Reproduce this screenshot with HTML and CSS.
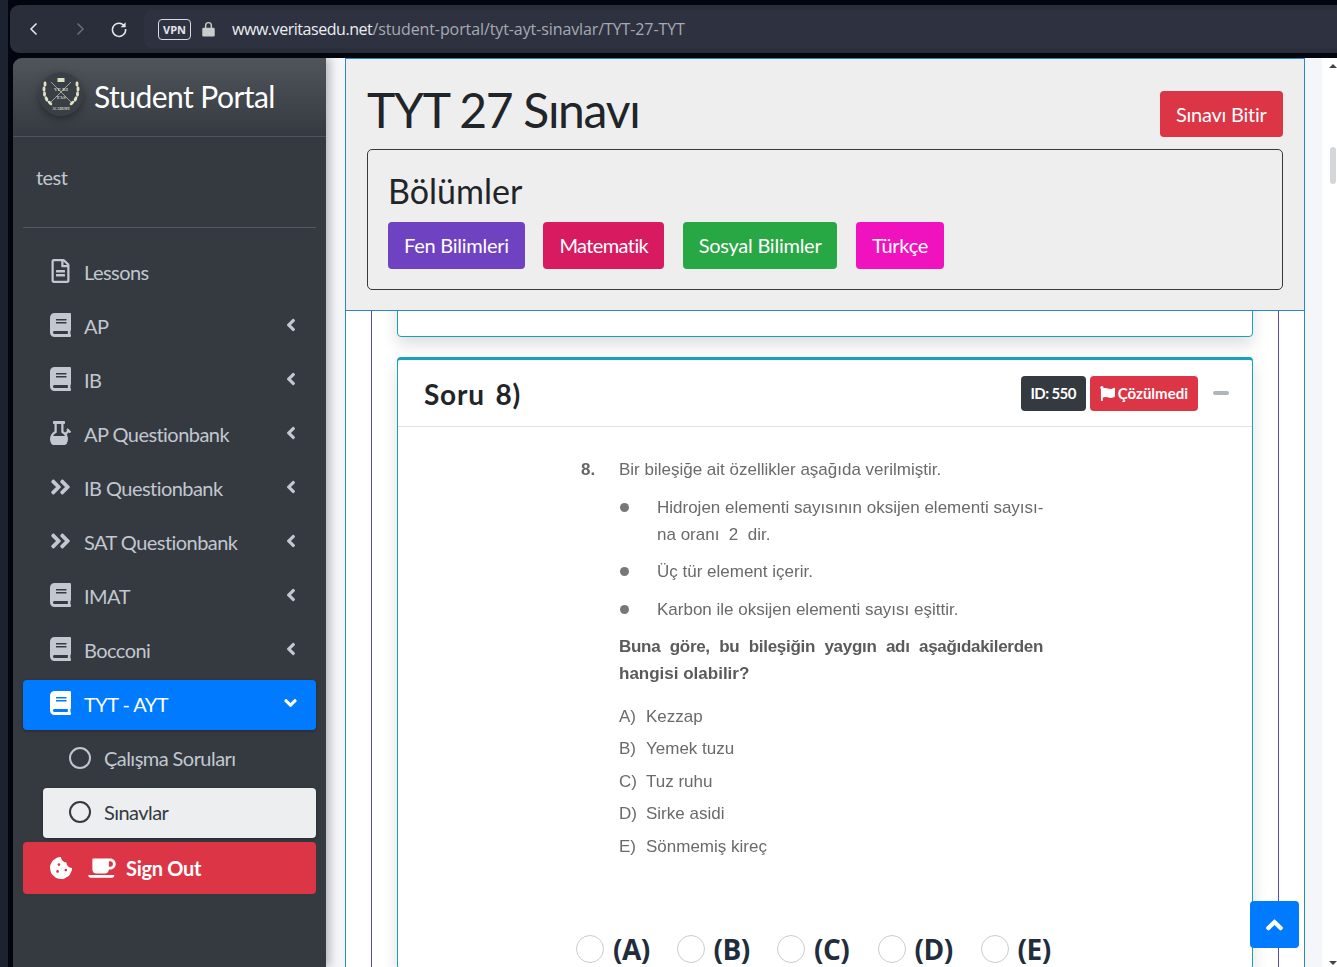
FILE: index.html
```html
<!DOCTYPE html>
<html lang="tr">
<head>
  <meta charset="UTF-8">
  <meta name="viewport" content="width=device-width, initial-scale=1">
  <title>TYT 27 Sınavı</title>
  <link rel="stylesheet" href="styles.css">
</head>
<body>
<svg class="sprite" width="0" height="0">
  <symbol id="i-book" viewBox="0 0 448 512"><path d="M448 360V24c0-13.3-10.7-24-24-24H96C43 0 0 43 0 96v320c0 53 43 96 96 96h328c13.3 0 24-10.7 24-24v-16c0-7.5-3.5-14.3-8.9-18.7-4.2-15.4-4.2-59.3 0-74.7 5.4-4.3 8.9-11.1 8.9-18.6zM128 134c0-3.3 2.7-6 6-6h212c3.3 0 6 2.7 6 6v20c0 3.3-2.7 6-6 6H134c-3.3 0-6-2.7-6-6v-20zm0 64c0-3.3 2.7-6 6-6h212c3.3 0 6 2.7 6 6v20c0 3.3-2.7 6-6 6H134c-3.3 0-6-2.7-6-6v-20zm253.4 250H96c-17.7 0-32-14.3-32-32 0-17.6 14.4-32 32-32h285.4c-1.9 17.1-1.9 46.9 0 64z"/></symbol>
  <symbol id="i-file" viewBox="0 0 384 512"><path d="M288 248v28c0 6.6-5.4 12-12 12H108c-6.6 0-12-5.4-12-12v-28c0-6.6 5.4-12 12-12h168c6.6 0 12 5.4 12 12zm-12 72H108c-6.6 0-12 5.4-12 12v28c0 6.6 5.4 12 12 12h168c6.6 0 12-5.4 12-12v-28c0-6.6-5.4-12-12-12zm108-188.1V464c0 26.5-21.5 48-48 48H48c-26.5 0-48-21.5-48-48V48C0 21.5 21.5 0 48 0h204.1C264.8 0 277 5.1 286 14.1L369.9 98c9 8.9 14.1 21.2 14.1 33.9zm-128-80V128h76.1L256 51.9zM336 464V176H232c-13.3 0-24-10.7-24-24V48H48v416h288z"/></symbol>
  <symbol id="i-bong" viewBox="0 0 448 512"><path d="M302.5 512c23.18 0 44.43-12.58 56-32.66C374.69 451.26 384 418.75 384 384c0-36.12-10.08-69.81-27.44-98.62L400 241.94l9.38 9.38c6.25 6.25 16.38 6.25 22.63 0l11.3-11.32c6.25-6.25 6.25-16.38 0-22.63l-52.69-52.69c-6.25-6.25-16.38-6.25-22.63 0l-11.31 11.31c-6.25 6.25-6.25 16.38 0 22.63l9.38 9.38-39.41 39.41c-11.56-11.37-24.53-21.33-38.65-29.51V63.74l15.97-.02c8.82-.01 15.97-7.16 15.98-15.98l.04-31.72C320 7.17 312.82-.01 303.97 0L80.03.26c-8.82.01-15.97 7.16-15.98 15.98l-.04 31.73c-.01 8.85 7.17 16.02 16.02 16.01L96 63.96v153.93C38.67 251.1 0 312.97 0 384c0 34.75 9.31 67.27 25.5 95.34C37.08 499.42 58.33 512 81.5 512h221zM120.06 259.43L144 245.56V63.91l96-.11v181.76l23.94 13.87c24.81 14.37 44.12 35.73 56.56 60.57h-257c12.45-24.84 31.75-46.2 56.56-60.57z"/></symbol>
  <symbol id="i-double" viewBox="0 0 448 512"><path d="M224.3 273l-136 136c-9.4 9.4-24.6 9.4-33.9 0l-22.6-22.6c-9.4-9.4-9.4-24.6 0-33.9l96.4-96.4-96.4-96.4c-9.4-9.4-9.4-24.6 0-33.9L54.3 103c9.4-9.4 24.6-9.4 33.9 0l136 136c9.5 9.4 9.5 24.6.1 34zm192-34l-136-136c-9.4-9.4-24.6-9.4-33.9 0l-22.6 22.6c-9.4 9.4-9.4 24.6 0 33.9l96.4 96.4-96.4 96.4c-9.4 9.4-9.4 24.6 0 33.9l22.6 22.6c9.4 9.4 24.6 9.4 33.9 0l136-136c9.4-9.2 9.4-24.4 0-33.8z"/></symbol>
  <symbol id="i-left" viewBox="0 0 256 512"><path d="M31.7 239l136-136c9.4-9.4 24.6-9.4 33.9 0l22.6 22.6c9.4 9.4 9.4 24.6 0 33.9L127.9 256l96.4 96.4c9.4 9.4 9.4 24.6 0 33.9L201.7 409c-9.4 9.4-24.6 9.4-33.9 0l-136-136c-9.5-9.4-9.5-24.6-.1-34z"/></symbol>
  <symbol id="i-down" viewBox="0 0 320 512"><path d="M143 352.3L7 216.3c-9.4-9.4-9.4-24.6 0-33.9l22.6-22.6c9.4-9.4 24.6-9.4 33.9 0l96.4 96.4 96.4-96.4c9.4-9.4 24.6-9.4 33.9 0l22.6 22.6c9.4 9.4 9.4 24.6 0 33.9l-136 136c-9.2 9.4-24.4 9.4-33.8 0z"/></symbol>
  <symbol id="i-up" viewBox="0 0 320 512"><path d="M177 159.7l136 136c9.4 9.4 9.4 24.6 0 33.9l-22.6 22.6c-9.4 9.4-24.6 9.4-33.9 0L160 255.9l-96.4 96.4c-9.4 9.4-24.6 9.4-33.9 0L7 329.7c-9.4-9.4-9.4-24.6 0-33.9l136-136c9.4-9.5 24.6-9.5 34-.1z"/></symbol>
</svg>

<div class="browser-bar">
  <svg class="nav-arrow" viewBox="0 0 12 16"><path d="M8.5 2.5 3 8l5.5 5.5"/></svg>
  <svg class="nav-arrow nav-arrow-off" viewBox="0 0 12 16"><path d="M3.5 2.5 9 8l-5.5 5.5"/></svg>
  <svg class="nav-reload" viewBox="0 0 18 18"><path d="M14.6 6.2A6.6 6.6 0 1 0 15.6 9"/><path class="fill" d="M15.6 2.2v5h-5z"/></svg>
  <div class="address">
    <span class="vpn">VPN</span>
    <svg class="lock" viewBox="0 0 14 18"><path class="shackle" d="M3.8 8V5a3.2 3.2 0 0 1 6.4 0v3"/><rect y="7.5" width="14" height="10" rx="1.5"/></svg>
    <span class="url"><b>www.veritasedu.net</b>/student-portal/tyt-ayt-sinavlar/TYT-27-TYT</span>
  </div>
</div>

<div class="app">
  <aside class="sidebar">
    <div class="brand">
      <svg class="logo" viewBox="0 0 44 44">
        <circle cx="22" cy="22" r="22" fill="#3a3f45"/>
        <g fill="#dfe2c4">
          <ellipse cx="6" cy="12" rx="1.5" ry="2.8"/><ellipse cx="5" cy="17" rx="1.5" ry="2.8"/><ellipse cx="5.5" cy="22" rx="1.5" ry="2.8"/><ellipse cx="7.5" cy="27" rx="1.5" ry="2.8" transform="rotate(-25 7.5 27)"/><ellipse cx="11" cy="31" rx="1.5" ry="2.8" transform="rotate(-45 11 31)"/>
          <ellipse cx="38" cy="12" rx="1.5" ry="2.8"/><ellipse cx="39" cy="17" rx="1.5" ry="2.8"/><ellipse cx="38.5" cy="22" rx="1.5" ry="2.8"/><ellipse cx="36.5" cy="27" rx="1.5" ry="2.8" transform="rotate(25 36.5 27)"/><ellipse cx="33" cy="31" rx="1.5" ry="2.8" transform="rotate(45 33 31)"/>
          <rect x="18.5" y="6" width="7" height="4"/>
        </g>
        <path d="M12 10 32 30M32 10 12 30" stroke="#b9bcb5" stroke-width=".8"/>
        <text class="logo-text" x="22" y="19" text-anchor="middle">VE  RI</text>
        <text class="logo-text" x="22" y="27" text-anchor="middle">TAS</text>
        <text class="logo-text logo-small" x="22" y="38" text-anchor="middle">ACADEMY</text>
      </svg>
      <span class="brand-name">Student Portal</span>
    </div>
    <div class="user-panel">test</div>
    <nav class="menu">
      <a class="menu-item"><svg class="ico"><use href="#i-file"/></svg><span>Lessons</span></a>
      <a class="menu-item"><svg class="ico"><use href="#i-book"/></svg><span>AP</span><svg class="caret"><use href="#i-left"/></svg></a>
      <a class="menu-item"><svg class="ico"><use href="#i-book"/></svg><span>IB</span><svg class="caret"><use href="#i-left"/></svg></a>
      <a class="menu-item"><svg class="ico"><use href="#i-bong"/></svg><span>AP Questionbank</span><svg class="caret"><use href="#i-left"/></svg></a>
      <a class="menu-item"><svg class="ico"><use href="#i-double"/></svg><span>IB Questionbank</span><svg class="caret"><use href="#i-left"/></svg></a>
      <a class="menu-item"><svg class="ico"><use href="#i-double"/></svg><span>SAT Questionbank</span><svg class="caret"><use href="#i-left"/></svg></a>
      <a class="menu-item"><svg class="ico"><use href="#i-book"/></svg><span>IMAT</span><svg class="caret"><use href="#i-left"/></svg></a>
      <a class="menu-item"><svg class="ico"><use href="#i-book"/></svg><span>Bocconi</span><svg class="caret"><use href="#i-left"/></svg></a>
      <a class="menu-item active"><svg class="ico"><use href="#i-book"/></svg><span>TYT - AYT</span><svg class="caret caret-down"><use href="#i-down"/></svg></a>
      <a class="menu-item sub"><i class="ring"></i><span>Çalışma Soruları</span></a>
      <a class="menu-item sub current"><i class="ring"></i><span>Sınavlar</span></a>
      <a class="sign-out">
        <svg class="ico-cookie" viewBox="0 0 512 512"><path d="M510.52 255.82c-69.97-.85-126.47-57.69-126.47-127.86-70.17 0-127-56.49-127.86-126.45-27.26-4.14-55.13.3-79.72 12.82l-69.13 35.22a132.221 132.221 0 0 0-57.79 57.81l-35.1 68.88a132.645 132.645 0 0 0-12.82 80.95l12.08 76.27a132.521 132.521 0 0 0 37.16 72.96l54.77 54.76a132.036 132.036 0 0 0 72.71 37.06l76.71 12.15c27.51 4.36 55.7-.11 80.53-12.76l69.13-35.21a132.273 132.273 0 0 0 57.79-57.81l35.1-68.88c12.56-24.64 17.01-52.58 12.91-79.91zM176 368c-17.67 0-32-14.33-32-32s14.33-32 32-32 32 14.33 32 32-14.33 32-32 32zm32-160c-17.67 0-32-14.33-32-32s14.33-32 32-32 32 14.33 32 32-14.33 32-32 32zm160 128c-17.67 0-32-14.33-32-32s14.33-32 32-32 32 14.33 32 32-14.33 32-32 32z"/></svg>
        <svg class="ico-coffee" viewBox="0 0 640 512"><path d="M192 384h192c53 0 96-43 96-96h32c70.6 0 128-57.4 128-128S582.6 32 512 32H120c-13.3 0-24 10.7-24 24v232c0 53 43 96 96 96zM512 96c35.3 0 64 28.7 64 64s-28.7 64-64 64h-32V96h32zm47.7 384H48.3c-47.6 0-61-64-36-64h583.3c25 0 11.8 64-35.9 64z"/></svg>
        <span>Sign Out</span>
      </a>
    </nav>
  </aside>

  <main class="main">
    <div class="content">
      <div class="exam-head">
        <div class="exam-title-row">
          <h1>TYT 27 Sınavı</h1>
          <a class="btn btn-finish">Sınavı Bitir</a>
        </div>
        <div class="sections">
          <h2>Bölümler</h2>
          <div class="section-btns">
            <a class="btn c-purple">Fen Bilimleri</a>
            <a class="btn c-maroon">Matematik</a>
            <a class="btn c-green">Sosyal Bilimler</a>
            <a class="btn c-fuchsia">Türkçe</a>
          </div>
        </div>
      </div>

      <div class="frame">
        <div class="frame-inner">
          <div class="card card-prev"></div>
          <div class="card">
            <div class="card-header">
              <h3>Soru 8)</h3>
              <span class="badge badge-dark">ID: 550</span>
              <span class="badge badge-red"><svg viewBox="0 0 512 512"><path d="M349.565 98.783C295.978 98.783 251.721 64 184.348 64c-24.955 0-47.309 4.384-68.045 12.013a55.947 55.947 0 0 0 3.586-23.562C118.117 24.015 94.806 1.206 66.338.048 34.345-1.254 8 24.296 8 56c0 19.026 9.497 35.825 24 45.945V488c0 13.255 10.745 24 24 24h16c13.255 0 24-10.745 24-24v-94.4c28.311-12.064 63.582-22.122 114.435-22.122 53.588 0 97.844 34.783 165.217 34.783 48.169 0 86.667-16.294 122.505-40.858C506.84 359.452 512 349.571 512 339.045v-243.1c0-23.393-24.269-38.87-45.485-29.016-34.338 15.948-76.454 31.854-116.95 31.854z"/></svg>Çözülmedi</span>
              <i class="collapse-minus"></i>
            </div>
            <div class="card-body">
              <div class="question">
                <div class="q-line"><b class="q-num">8.</b><span>Bir bileşiğe ait özellikler aşağıda verilmiştir.</span></div>
                <div class="q-line q-item"><i class="dot"></i><span>Hidrojen elementi sayısının oksijen elementi sayısı-<br>na oranı&nbsp; 2&nbsp; dir.</span></div>
                <div class="q-line q-item"><i class="dot"></i><span>Üç tür element içerir.</span></div>
                <div class="q-line q-item"><i class="dot"></i><span>Karbon ile oksijen elementi sayısı eşittir.</span></div>
                <div class="q-ask"><b class="q-just">Buna göre, bu bileşiğin yaygın adı aşağıdakilerden</b><b>hangisi olabilir?</b></div>
                <ul class="q-options">
                  <li><span>A)</span>Kezzap</li>
                  <li><span>B)</span>Yemek tuzu</li>
                  <li><span>C)</span>Tuz ruhu</li>
                  <li><span>D)</span>Sirke asidi</li>
                  <li><span>E)</span>Sönmemiş kireç</li>
                </ul>
              </div>
              <div class="answers">
                <label><i class="radio"></i>(A)</label>
                <label><i class="radio"></i>(B)</label>
                <label><i class="radio"></i>(C)</label>
                <label><i class="radio"></i>(D)</label>
                <label><i class="radio"></i>(E)</label>
              </div>
            </div>
          </div>
        </div>
      </div>
    </div>
    <div class="scrollbar">
      <i class="sb-up"></i>
      <i class="sb-thumb"></i>
      <i class="sb-down"></i>
    </div>
  </main>
</div>

<a class="to-top"><svg><use href="#i-up"/></svg></a>
</body>
</html>
```

FILE: styles.css
```css
* {
  box-sizing: border-box;
}
html, body {
  height: 100%;
}
body {
  margin: 0;
  height: 967px;
  overflow: hidden;
  background-color: #03060f;
  border-left: 8px solid #1c2230;
  font-family: Lato, "Open Sans", sans-serif;
  color: #212529;
  padding-top: 5px;
}
.sprite {
  position: absolute;
}
a {
  text-decoration: none;
}
h1, h2, h3 {
  margin: 0;
  font-weight: 400;
}

/* browser chrome */
.browser-bar {
  height: 48px;
  margin-left: 2px;
  background-color: #2a2e3b;
  border-radius: 9px 0 0 9px;
  display: flex;
  align-items: center;
  padding-left: 18px;
}
.nav-arrow {
  width: 12px;
  height: 16px;
  margin-right: 34px;
  fill: none;
  stroke: #e8e9ec;
  stroke-width: 1.5;
}
.nav-arrow-off {
  stroke: #6a6d78;
  margin-right: 24px;
}
.nav-reload {
  width: 18px;
  height: 18px;
  fill: none;
  stroke: #e8e9ec;
  stroke-width: 1.5;
}
.nav-reload .fill {
  fill: #e8e9ec;
  stroke: none;
}
.address {
  flex: 1;
  align-self: stretch;
  margin: 5px 0 5px 16px;
  padding-left: 14px;
  background-color: #2e3240;
  border-radius: 8px 0 0 8px;
  display: flex;
  align-items: center;
}
.vpn {
  width: 33px;
  height: 21px;
  border: 1px solid #d8dae0;
  border-radius: 4px;
  color: #e4e5ea;
  font: 700 11px/19px "Open Sans", sans-serif;
  text-align: center;
}
.lock {
  width: 13px;
  height: 16px;
  margin-left: 11px;
  fill: #c9cdca;
}
.lock .shackle {
  fill: none;
  stroke: #c9cdca;
  stroke-width: 1.6;
}
.url {
  margin-left: 17px;
  color: #a7aab3;
  font: 400 16px "Open Sans", sans-serif;
  letter-spacing: -.1px;
}
.url b {
  font-weight: 400;
  color: #eceef2;
  letter-spacing: -.45px;
}

.app {
  display: flex;
  height: 909px;
  margin-top: 5px;
  margin-left: 5px;
}

/* sidebar */
.sidebar {
  width: 313px;
  flex-shrink: 0;
  background-color: #343a40;
  border-radius: 9px 0 0 0;
  box-shadow: 4px 0 10px rgba(0, 0, 0, .25);
  position: relative;
  z-index: 2;
  letter-spacing: -.55px;
}
.brand {
  height: 79px;
  display: flex;
  align-items: center;
  padding: 0 0 2px 25px;
  background: linear-gradient(#50555b, #343a40);
  border-bottom: 1px solid #4b545c;
  border-radius: 9px 0 0 0;
}
.logo {
  width: 44px;
  height: 44px;
  margin-left: 1px;
  margin-bottom: 5px;
  border-radius: 50%;
  box-shadow: 0 3px 8px rgba(0, 0, 0, .35);
  letter-spacing: 0;
}
.logo-text {
  font: 700 5px "Liberation Serif", serif;
  fill: #d5d6cc;
}
.logo-small {
  font-size: 3.4px;
}
.brand-name {
  margin-left: 11px;
  color: #fff;
  font-size: 30px;
}
.user-panel {
  height: 91px;
  margin: 0 10px;
  padding: 28px 0 0 13px;
  border-bottom: 1px solid #4f5962;
  color: #c2c7d0;
  font-size: 20px;
}
.menu {
  padding: 20px 10px 0;
  display: flex;
  flex-direction: column;
  gap: 4px;
}
.menu-item {
  height: 50px;
  display: flex;
  align-items: center;
  padding-left: 27px;
  padding-bottom: 2px;
  border-radius: 4px;
  color: #c2c7d0;
  font-size: 20px;
}
.ico {
  width: 21px;
  height: 24px;
  margin-right: 13px;
  margin-bottom: 2px;
  fill: #c2c7d0;
  flex-shrink: 0;
}
.caret {
  width: 12px;
  height: 20px;
  margin-left: auto;
  margin-right: 19px;
  margin-bottom: 2px;
  fill: #c2c7d0;
}
.caret-down {
  width: 15px;
  margin-right: 18px;
  fill: #fff;
}
.active {
  background-color: #007bff;
  color: #fff;
  box-shadow: 0 1px 3px rgba(0, 0, 0, .3);
}
.active .ico {
  fill: #fff;
}
.sub {
  margin-left: 20px;
  padding-left: 26px;
}
.ring {
  width: 22px;
  height: 22px;
  margin-right: 13px;
  margin-bottom: 1px;
  border: 2.5px solid #c2c7d0;
  border-radius: 50%;
}
.current {
  background-color: #eceef0;
  color: #343a40;
  box-shadow: 0 1px 3px rgba(0, 0, 0, .3);
}
.current .ring {
  border-color: #343a40;
}
.sign-out {
  height: 52px;
  display: flex;
  align-items: center;
  padding-left: 27px;
  background-color: #dc3545;
  border-radius: 4px;
  color: #fff;
  font-size: 20px;
  font-weight: 700;
  letter-spacing: -.3px;
}
.ico-cookie {
  width: 22px;
  height: 22px;
  fill: #fff;
}
.ico-coffee {
  width: 28px;
  height: 22px;
  margin-left: 16px;
  margin-right: 10px;
  fill: #fff;
}

/* main */
.main {
  flex: 1;
  display: flex;
  background-color: #f4f6f9;
}
.content {
  flex: 1;
  position: relative;
  overflow: hidden;
}
.scrollbar {
  width: 15px;
  background-color: #fff;
  display: flex;
  flex-direction: column;
  align-items: center;
  padding-left: 7px;
}
.sb-up, .sb-down {
  width: 0;
  height: 0;
  border-left: 4px solid transparent;
  border-right: 4px solid transparent;
}
.sb-up {
  margin-top: 6px;
  border-bottom: 4px solid #444;
}
.sb-thumb {
  width: 6px;
  height: 37px;
  margin-top: 79px;
  background-color: #d3d7dc;
  border-radius: 3px;
}
.sb-down {
  margin-top: auto;
  margin-bottom: 2px;
  border-top: 4px solid #444;
}

.exam-head {
  position: absolute;
  top: 0;
  left: 19px;
  width: 960px;
  height: 253px;
  padding: 32px 21px 0 21px;
  background-color: #eee;
  border: 1px solid #2b85d0;
  z-index: 1;
}
.exam-title-row {
  display: flex;
  justify-content: space-between;
  height: 58px;
}
h1 {
  font-size: 48px;
  line-height: 38px;
  letter-spacing: -1.3px;
}
.btn {
  display: inline-block;
  height: 47px;
  padding: 0 16px;
  border-radius: 4px;
  color: #fff;
  font-size: 20px;
  line-height: 47px;
  letter-spacing: -.25px;
}
.btn-finish {
  height: 46px;
  padding: 0 16.5px;
  background-color: #dc3545;
}
.sections {
  height: 141px;
  padding: 20px 20px 0;
  border: 1px solid #343a40;
  border-radius: 5px;
}
h2 {
  font-size: 34px;
  line-height: 41px;
}
.section-btns {
  display: flex;
  gap: 18.5px;
  margin-top: 11px;
}
.c-purple { background-color: #6f42c1; }
.c-maroon { background-color: #d81b60; letter-spacing: -.6px; }
.c-green { background-color: #28a745; }
.c-fuchsia { background-color: #f012be; }

.frame {
  width: 960px;
  height: 100%;
  margin-left: 19px;
  padding: 0 25px;
  background-color: #fff;
  border-left: 1px solid #2b85d0;
  border-right: 1px solid #2b85d0;
}
.frame-inner {
  height: 100%;
  padding: 0 25px;
  border-left: 1px solid #5b46c4;
  border-right: 1px solid #5b46c4;
  display: flex;
  flex-direction: column;
  gap: 20px;
}
.card {
  flex-shrink: 0;
  background-color: #fff;
  border: 1px solid #17a2b8;
  border-top-width: 3px;
  border-radius: 4px;
  box-shadow: 0 8px 16px rgba(0, 0, 0, .13);
}
.card-prev {
  height: 279px;
  border-top-width: 1px;
}
.card-header {
  height: 67px;
  display: flex;
  align-items: center;
  gap: 4px;
  padding: 0 23px 0 26px;
  border-bottom: 1px solid #dfe2e5;
}
h3 {
  margin-right: auto;
  padding-top: 2px;
  font-size: 28px;
  font-weight: 700;
  letter-spacing: .8px;
  word-spacing: 3px;
}
.badge {
  height: 35px;
  padding: 0 10px;
  border-radius: 4px;
  color: #fff;
  font-size: 15px;
  font-weight: 700;
  line-height: 35px;
  display: flex;
  align-items: center;
}
.badge svg {
  width: 15px;
  height: 15px;
  margin-right: 3px;
  fill: #fff;
}
.badge-dark {
  background-color: #343a40;
  letter-spacing: -.6px;
}
.badge-red {
  background-color: #dc3545;
}
.collapse-minus {
  width: 16px;
  height: 4px;
  margin-left: 11px;
  background-color: #adb5bd;
  border-radius: 2px;
}
.card-body {
  padding: 29px 0 0 183px;
}
.question {
  font-family: "Liberation Sans", Arial, sans-serif;
  font-size: 17px;
  line-height: 27px;
  color: #6a6a6a;
  filter: blur(.3px);
}
.q-line {
  display: flex;
  margin-bottom: 10.5px;
}
.q-num {
  width: 38px;
  color: #666;
}
.q-item {
  padding-left: 38px;
}
.dot {
  width: 9px;
  height: 9px;
  margin: 9px 28px 0 1px;
  background-color: #777;
  border-radius: 50%;
  flex-shrink: 0;
}
.q-ask {
  margin: 0 0 13.5px 38px;
  width: 424px;
  color: #5a5a5a;
}
.q-ask b {
  display: block;
}
.q-just {
  text-align: justify;
  text-align-last: justify;
  letter-spacing: -.3px;
}
.q-options {
  list-style: none;
  margin: 0 0 0 38px;
  padding: 0;
  line-height: 32.5px;
}
.q-options span {
  display: inline-block;
  width: 27px;
}
.answers {
  display: flex;
  margin-top: 67px;
  margin-left: -5px;
  font-family: "Open Sans", sans-serif;
  font-size: 28px;
  font-weight: 700;
  letter-spacing: -.5px;
  color: #1f2d3d;
}
.answers label {
  display: flex;
  align-items: center;
  width: 100.5px;
}
.answers label:nth-child(4) {
  width: 103px;
}
.radio {
  width: 28px;
  height: 28px;
  margin-right: 9px;
  border: 1px solid #c9ccd0;
  border-radius: 50%;
  background-color: #fff;
}

.to-top {
  position: fixed;
  right: 38px;
  bottom: 19px;
  width: 49px;
  height: 47px;
  background-color: #007bff;
  border-radius: 4px;
  display: flex;
  align-items: center;
  justify-content: center;
  z-index: 3;
}
.to-top svg {
  width: 17px;
  height: 28px;
  fill: #fff;
}
```
